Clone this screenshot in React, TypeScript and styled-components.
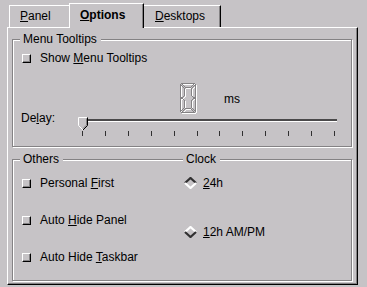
import React from "react";
import styled, { createGlobalStyle } from "styled-components";

const FACE = "#c6c3c6";
const DARK = "#848284";
const BLACK = "#000";
const LIGHT = "#fff";

const Global = createGlobalStyle`
  html, body { margin: 0; padding: 0; background: ${FACE}; }
  body {
    font-family: "Liberation Sans", Arial, Helvetica, sans-serif;
    font-size: 12px;
    color: #000;
  }
`;

const Window = styled.div`
  width: 367px;
  height: 287px;
  box-sizing: border-box;
  padding: 3px 0 0 7px;
  background: ${FACE};
  overflow: hidden;
`;

const TabBar = styled.div`
  display: flex;
  align-items: flex-end;
  height: 24px;
  padding-left: 2px;
`;

const Tab = styled.div<{ $selected?: boolean; $w: number; $noLeft?: boolean; $noRight?: boolean; $pl: number }>`
  box-sizing: border-box;
  width: ${(p) => p.$w}px;
  height: ${(p) => (p.$selected ? 25 : 22)}px;
  margin-bottom: ${(p) => (p.$selected ? -1 : 0)}px;
  position: relative;
  z-index: ${(p) => (p.$selected ? 1 : 0)};
  background: ${FACE};
  border-top: 1px solid ${LIGHT};
  border-left: ${(p) => (p.$noLeft ? "none" : `1px solid ${LIGHT}`)};
  border-right: ${(p) => (p.$noRight ? "none" : `1px solid ${BLACK}`)};
  box-shadow: ${(p) => (p.$noRight ? "none" : `inset -1px 0 0 ${DARK}`)};
  padding: ${(p) => (p.$selected ? 4 : 3)}px 0 0 ${(p) => p.$pl}px;
  font-weight: ${(p) => (p.$selected ? 700 : 400)};
  line-height: 14px;
  white-space: nowrap;
`;

const Pane = styled.div`
  box-sizing: border-box;
  width: 351px;
  height: 258px;
  border-top: 1px solid ${LIGHT};
  border-left: 1px solid ${LIGHT};
  border-right: 1px solid ${BLACK};
  border-bottom: 1px solid ${BLACK};
  box-shadow: inset -1px -1px 0 ${DARK};
  padding: 11px 0 0 4px;
  display: flex;
  flex-direction: column;
  gap: 12px;
`;

const Group = styled.div<{ $h: number }>`
  position: relative;
  box-sizing: border-box;
  width: 340px;
  height: ${(p) => p.$h}px;
  border: 1px solid ${DARK};
  box-shadow: inset 1px 1px 0 ${LIGHT}, 1px 1px 0 ${LIGHT};
`;

const GroupTitle = styled.span<{ $left: number }>`
  position: absolute;
  top: -8px;
  left: ${(p) => p.$left}px;
  padding: 0 4px 0 3px;
  background: ${FACE};
  line-height: 14px;
  white-space: nowrap;
`;

const TooltipBody = styled.div`
  padding: 11px 0 0 9px;
`;

const CheckRow = styled.div`
  display: flex;
  align-items: center;
  gap: 9px;
  height: 14px;
  line-height: 14px;
  white-space: nowrap;
`;

const CheckBox = styled.span`
  display: block;
  box-sizing: border-box;
  width: 9px;
  height: 9px;
  border: 1px solid;
  border-color: ${LIGHT} ${BLACK} ${BLACK} ${LIGHT};
  box-shadow: inset -1px -1px 0 ${DARK};
  background: ${FACE};
`;

const DelayArea = styled.div`
  display: grid;
  grid-template-columns: 56px 260px;
  grid-template-rows: 28px auto;
  margin-top: 18px;
`;

const LcdRow = styled.div`
  grid-column: 2;
  grid-row: 1;
  display: flex;
  align-items: flex-start;
  padding-left: 102px;
  height: 28px;
`;

const Unit = styled.span`
  margin: 9px 0 0 27px;
  line-height: 14px;
`;

const DelayLabel = styled.span`
  grid-column: 1;
  grid-row: 2;
  line-height: 14px;
  margin-left: -1px;
`;

const Slider = styled.div`
  grid-column: 2;
  grid-row: 2;
  position: relative;
  height: 25px;
  padding-top: 8px;
  box-sizing: border-box;
`;

const Groove = styled.div`
  box-sizing: border-box;
  margin-left: 8px;
  width: 251px;
  height: 3px;
  border-top: 2px solid #4a494a;
  border-bottom: 1px solid ${LIGHT};
`;

const Ticks = styled.div`
  display: flex;
  justify-content: space-between;
  margin: 9px 0 0 4px;
  width: 253px;
  height: 5px;
`;

const Tick = styled.span`
  display: block;
  width: 1px;
  height: 5px;
  background: #313031;
`;

const Handle = styled.svg`
  position: absolute;
  top: 6px;
  left: 0;
`;

const OthersGrid = styled.div`
  display: grid;
  grid-template-columns: 170px 1fr;
  height: 100%;
`;

const Column = styled.div<{ $gap: number; $pl: number }>`
  position: relative;
  display: flex;
  flex-direction: column;
  gap: ${(p) => p.$gap}px;
  padding: 16px 0 0 ${(p) => p.$pl}px;
`;

const RadioRow = styled.div`
  display: flex;
  align-items: center;
  gap: 6px;
  height: 14px;
  line-height: 14px;
  white-space: nowrap;
`;

const Mn = styled.span`
  text-decoration: underline;
  text-underline-offset: 1px;
`;

const Check: React.FC<{ children: React.ReactNode }> = ({ children }) => (
  <CheckRow>
    <CheckBox />
    <span>{children}</span>
  </CheckRow>
);

const Diamond: React.FC<{ on?: boolean }> = ({ on }) => {
  const top = on ? "#313031" : LIGHT;
  const bottom = on ? LIGHT : "#313031";
  return (
    <svg width="13" height="12" viewBox="0 0 13 12">
      <polygon points="1,6 6.5,1 12,6 6.5,11" fill={FACE} />
      <polyline points="1,6 6.5,1 12,6" fill="none" stroke={top} strokeWidth="2.2" />
      <polyline points="1,6 6.5,11 12,6" fill="none" stroke={bottom} strokeWidth="2.2" />
    </svg>
  );
};

const Radio: React.FC<{ on?: boolean; children: React.ReactNode }> = ({ on, children }) => (
  <RadioRow>
    <Diamond on={on} />
    <span>{children}</span>
  </RadioRow>
);

const SEGS = [
  "1.5,0.5 14.5,0.5 10.5,4.5 5.5,4.5",
  "1.5,29.5 14.5,29.5 10.5,25.5 5.5,25.5",
  "0.5,1.5 4.5,5.5 4.5,12.5 2.5,14.5 0.5,14.5",
  "0.5,15.5 2.5,15.5 4.5,17.5 4.5,24.5 0.5,28.5",
  "15.5,1.5 11.5,5.5 11.5,12.5 13.5,14.5 15.5,14.5",
  "15.5,15.5 13.5,15.5 11.5,17.5 11.5,24.5 15.5,28.5",
];

const LcdZero: React.FC = () => (
  <svg width="17" height="31" viewBox="0 0 17 31" shapeRendering="crispEdges">
    {SEGS.map((p, i) => (
      <polygon key={"l" + i} points={p} fill="none" stroke={LIGHT} strokeWidth="1" transform="translate(1 1)" />
    ))}
    {SEGS.map((p, i) => (
      <polygon key={"d" + i} points={p} fill="none" stroke={DARK} strokeWidth="1" />
    ))}
  </svg>
);

export default function App() {
  return (
    <>
      <Global />
      <Window>
        <TabBar>
          <Tab $w={60} $pl={10} $noRight>
            <Mn>P</Mn>anel
          </Tab>
          <Tab $w={75} $pl={10} $selected>
            <Mn>O</Mn>ptions
          </Tab>
          <Tab $w={77} $pl={11} $noLeft>
            <Mn>D</Mn>esktops
          </Tab>
        </TabBar>
        <Pane>
          <Group $h={108}>
            <GroupTitle $left={7}>Menu Tooltips</GroupTitle>
            <TooltipBody>
              <Check>
                Show <Mn>M</Mn>enu Tooltips
              </Check>
              <DelayArea>
                <LcdRow>
                  <LcdZero />
                  <Unit>ms</Unit>
                </LcdRow>
                <DelayLabel>
                  De<Mn>l</Mn>ay:
                </DelayLabel>
                <Slider>
                  <Groove />
                  <Ticks>
                    {Array.from({ length: 12 }).map((_, i) => (
                      <Tick key={i} />
                    ))}
                  </Ticks>
                  <Handle width="10" height="14" viewBox="0 0 10 14">
                    <polygon points="0.5,0.5 9.5,0.5 9.5,8.5 5,13 0.5,8.5" fill={FACE} />
                    <polyline points="0.5,8.5 0.5,0.5 9,0.5" fill="none" stroke={LIGHT} />
                    <polyline points="0.5,8.5 5,13" fill="none" stroke={LIGHT} />
                    <polyline points="9.5,0.5 9.5,8.5 5,13" fill="none" stroke={BLACK} />
                    <polyline points="8.5,1.5 8.5,8 5,11.5" fill="none" stroke={DARK} />
                  </Handle>
                </Slider>
              </DelayArea>
            </TooltipBody>
          </Group>
          <Group $h={122}>
            <OthersGrid>
              <Column $gap={23} $pl={9}>
                <GroupTitle $left={7}>Others</GroupTitle>
                <Check>
                  Personal <Mn>F</Mn>irst
                </Check>
                <Check>
                  Auto <Mn>H</Mn>ide Panel
                </Check>
                <Check>
                  Auto Hide <Mn>T</Mn>askbar
                </Check>
              </Column>
              <Column $gap={35} $pl={1}>
                <GroupTitle $left={0}>Clock</GroupTitle>
                <Radio on>
                  <Mn>2</Mn>4h
                </Radio>
                <Radio>
                  <Mn>1</Mn>2h AM/PM
                </Radio>
              </Column>
            </OthersGrid>
          </Group>
        </Pane>
      </Window>
    </>
  );
}
